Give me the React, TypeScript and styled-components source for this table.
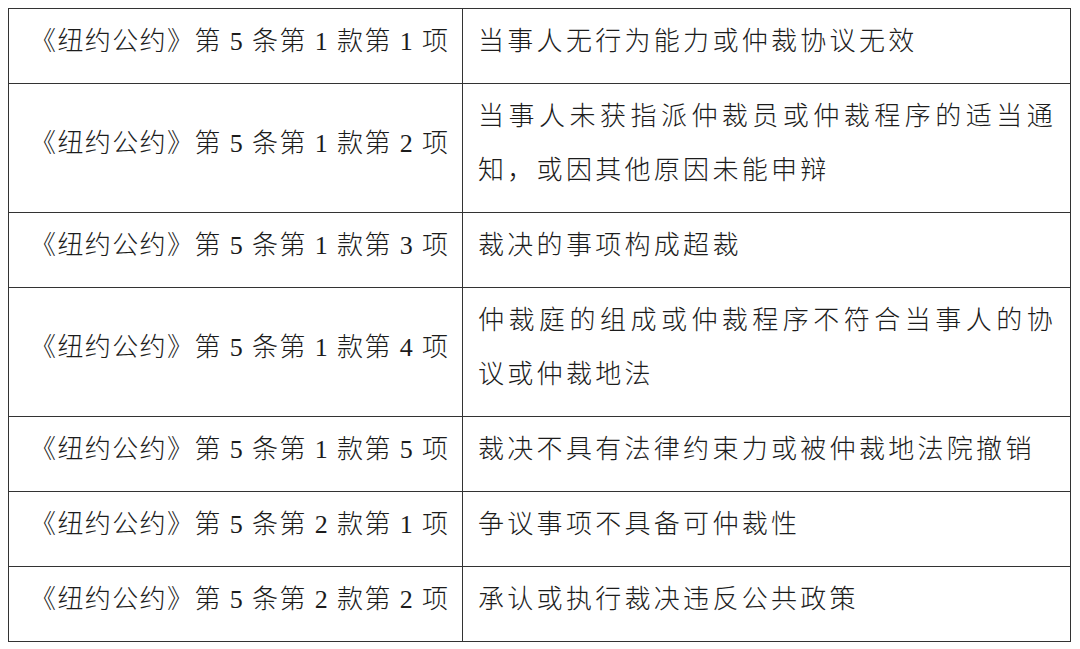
import React from 'react';
import styled, { createGlobalStyle } from 'styled-components';

const GlobalStyle = createGlobalStyle`
  html, body {
    margin: 0;
    padding: 0;
    background: #ffffff;
  }
  body {
    font-family: "Liberation Serif", "Noto Sans CJK SC", serif;
    color: #1c1c1c;
  }
`;

const Page = styled.div`
  padding: 8px 0 0 8px;
`;

const Table = styled.table`
  border-collapse: collapse;
  width: 1063px;
  table-layout: fixed;
  font-size: 26px;
  font-weight: 300;
`;

const Row = styled.tr``;

const Cell = styled.td`
  border: 1px solid #333;
  line-height: 54px;
  vertical-align: middle;
  padding: 6px 14px 14px 15px;
`;

const ArticleCell = styled(Cell)`
  width: 418px;
  padding-left: 21px;
  letter-spacing: 1.4px;
  white-space: nowrap;
`;

const GroundCell = styled(Cell)`
  letter-spacing: 3.3px;
  text-align: justify;
`;

const rows: { article: string; ground: string }[] = [
  { article: '《纽约公约》第 5 条第 1 款第 1 项', ground: '当事人无行为能力或仲裁协议无效' },
  { article: '《纽约公约》第 5 条第 1 款第 2 项', ground: '当事人未获指派仲裁员或仲裁程序的适当通知，或因其他原因未能申辩' },
  { article: '《纽约公约》第 5 条第 1 款第 3 项', ground: '裁决的事项构成超裁' },
  { article: '《纽约公约》第 5 条第 1 款第 4 项', ground: '仲裁庭的组成或仲裁程序不符合当事人的协议或仲裁地法' },
  { article: '《纽约公约》第 5 条第 1 款第 5 项', ground: '裁决不具有法律约束力或被仲裁地法院撤销' },
  { article: '《纽约公约》第 5 条第 2 款第 1 项', ground: '争议事项不具备可仲裁性' },
  { article: '《纽约公约》第 5 条第 2 款第 2 项', ground: '承认或执行裁决违反公共政策' },
];

export default function App() {
  return (
    <>
      <GlobalStyle />
      <Page>
        <Table>
          <tbody>
            {rows.map((r, i) => (
              <Row key={i}>
                <ArticleCell>{r.article}</ArticleCell>
                <GroundCell>{r.ground}</GroundCell>
              </Row>
            ))}
          </tbody>
        </Table>
      </Page>
    </>
  );
}
